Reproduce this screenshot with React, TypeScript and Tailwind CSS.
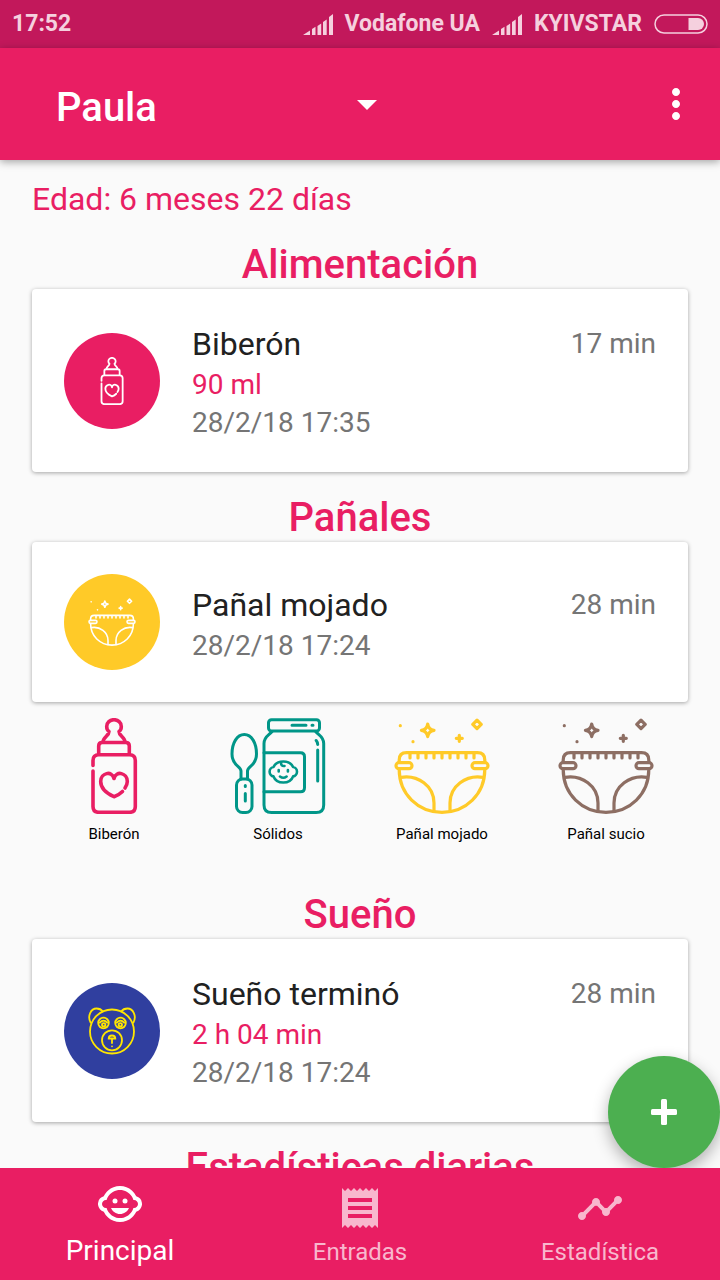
import React from 'react';
import { MdArrowDropDown, MdChildCare, MdMoreVert, MdReceipt, MdTimeline } from 'react-icons/md';

interface IconProps {
  className?: string;
}

interface Entry {
  title: string;
  detail?: string;
  date: string;
  ago: string;
  color: string;
  icon: React.ReactNode;
}

function BottleIcon({ className }: IconProps) {
  return (
    <svg viewBox="0 0 96 96" fill="none" stroke="currentColor" strokeWidth="3.600" strokeLinecap="round" strokeLinejoin="round" className={className}>
      {/* Nipple */}
      <path d="M37 24c0-5 6-6 6-10.500C41.500 12.500 40.700 10.500 40.700 8.500a7.300 6.800 0 0 1 14.600 0c0 2-.800 4-2.300 5C53 18 59 19 59 24" />
      {/* Collar */}
      <path d="M32.700 36V28q0-3.500 3.500-3.500h23.600q3.500 0 3.500 3.500v8" />
      {/* Body */}
      <path d="M27 47.500V42.500q0-5.800 5.800-5.800h30.700q5.800 0 5.800 5.800v46q0 5.800-5.800 5.800H32.800q-5.800 0-5.800-5.800V53" />
      <path d="M56.500 73.500Q53 77 48 78.700C42 76 34.700 71 34.700 63.500c0-8.500 11.300-11.500 13.300-3 2-8.500 13.300-5.500 13.300 3 0 3-1.300 5-2.300 6.500" />
    </svg>
  );
}

function JarIcon({ className }: IconProps) {
  return (
    <svg viewBox="0 0 96 96" fill="none" stroke="currentColor" strokeWidth="3" strokeLinecap="round" strokeLinejoin="round" className={className}>
      {/* Spoon */}
      <path d="M11 61v-8c0-5-9-5-9-17C2 25 7 16.500 14.300 16.500S26.500 25 26.500 36c0 12-9 12-9 17v8" />
      <rect x="6.500" y="61" width="15.500" height="33.500" rx="6" />
      <path d="M15.300 67.500v1M15.300 75.500v7.500" />
      {/* Lid */}
      <rect x="38.500" y="1.700" width="51" height="11.300" rx="3" />
      <path d="M62 7.300h14M82 7.300h1" />
      {/* Jar */}
      <path d="M42 13.500c-3 4-8 5-8 12v61.500q0 7.500 7.500 7.500h44.700q7.500 0 7.500-7.500V25.500c0-7-5-8-8-12" />
      <path d="M34 34.700h36.500q4 0 4 4v31q0 4-4 4H34" />
      <path d="M86.200 22.500q1.300 1.500 1.500 4M87.700 32v31" />
      {/* Baby face */}
      <path d="M43.500 49C45 45.500 49 43.500 53.300 43.500S61.600 45.500 63.100 49c2 .3 3.900 2.400 3.900 4.700s-1.900 4.400-3.900 4.700c-1.500 3.800-5.500 6.100-9.800 6.100s-8.300-2.300-9.800-6.100c-2-.3-3.900-2.400-3.900-4.700s1.900-4.400 3.900-4.700z" strokeWidth="2.600" />
      <path d="M51 44.500q0 4 3.500 3.500M48.700 52v1.500M57.900 52v1.500M50 58.500q3.300 2.500 6.600 0" strokeWidth="2.600" />
    </svg>
  );
}

function DiaperIcon({ className }: IconProps) {
  return (
    <svg viewBox="0 0 96 96" fill="none" stroke="currentColor" strokeWidth="3.200" strokeLinecap="round" strokeLinejoin="round" className={className}>
      {/* Sparkles */}
      <path d="M33.700 6q.8 5.500 6.300 6.300-5.500.8-6.300 6.300-.8-5.500-6.300-6.300 5.500-.8 6.300-6.300z" />
      <path d="M65.300 17.300v6M62.300 20.300h6" />
      <path d="M83 2.200l4.200 4.200-4.200 4.200-4.200-4.200z" />
      <path d="M6.300 7.700h.01M19 23.700h.01" />
      {/* Waist */}
      <path d="M5.200 44v-2q0-7.300 7.300-7.300h71q7.300 0 7.300 7.300v2" />
      <path d="M16 36v4M24 36v4M32 36v4M40 36v4M48 36v4M56 36v4M64 36v4M72 36v4M80 36v4" />
      <rect x="2" y="44.700" width="16" height="6" rx="3" />
      <rect x="78" y="44.700" width="16" height="6" rx="3" />
      {/* Legs */}
      <path d="M5.200 51.500C5.200 76 24 94.300 48 94.300S90.800 76 90.800 51.500" />
      <path d="M7 59.300C24 56.500 40 68 40 85v8M89 59.300C72 56.500 56 68 56 85v8" />
    </svg>
  );
}

function BearIcon({ className }: IconProps) {
  return (
    <svg viewBox="0 0 48 48" fill="none" stroke="currentColor" strokeWidth="1.800" strokeLinecap="round" className={className}>
      <circle cx="24" cy="24.500" r="22" />
      <path d="M2.600 15.500C-1 9 3 1.500 8.500 1.500c3 0 5 1.200 6.300 3M45.400 15.500C49 9 45 1.500 39.500 1.500c-3 0-5 1.200-6.300 3" />
      <circle cx="15.500" cy="16" r="5.300" />
      <circle cx="32.500" cy="16" r="5.300" />
      <path d="M11.800 15.700q3.700-4 7.400 0M28.800 15.700q3.700-4 7.400 0" />
      <circle cx="15.700" cy="17.800" r="1.700" />
      <circle cx="32.300" cy="17.800" r="1.700" />
      <circle cx="24" cy="33.300" r="10" />
      <path d="M20.700 31.500q0-3 3.300-3t3.300 3zM24 32v4M24 39.300h.01" />
    </svg>
  );
}

function SignalIcon() {
  return (
    <svg viewBox="0 0 30 21" fill="currentColor" className="w-[30px] h-[21px]">
      <path d="M0 21l7-4.500V21zM9 21v-6l3.500-2.200V21zM14.500 21v-9l3.700-2.500V21zM20 21V8l3.700-2.500V21zM26 21V3l4-3v21z" />
    </svg>
  );
}

function BatteryIcon() {
  return (
    <svg viewBox="0 0 54 20" className="w-[54px] h-5">
      <rect x="1" y="1" width="52" height="18" rx="9" fill="none" stroke="currentColor" strokeWidth="1.500" />
      <path d="M34.500 4H44a6 6 0 0 1 0 12H34.500z" fill="currentColor" />
    </svg>
  );
}

const feeding: Entry = {
  title: 'Biberón',
  detail: '90 ml',
  date: '28/2/18 17:35',
  ago: '17 min',
  color: 'bg-[#e91e63] text-white',
  icon: <BottleIcon className="size-12" />
};

const diaper: Entry = {
  title: 'Pañal mojado',
  date: '28/2/18 17:24',
  ago: '28 min',
  color: 'bg-[#ffca28] text-white',
  icon: <DiaperIcon className="size-12" />
};

const sleep: Entry = {
  title: 'Sueño terminó',
  detail: '2 h 04 min',
  date: '28/2/18 17:24',
  ago: '28 min',
  color: 'bg-[#303f9f] text-[#ffe600]',
  icon: <BearIcon className="size-12" />
};

const quickActions = [
  { label: 'Biberón', color: 'text-[#e91e63]', Icon: BottleIcon },
  { label: 'Sólidos', color: 'text-[#009688]', Icon: JarIcon },
  { label: 'Pañal mojado', color: 'text-[#ffca28]', Icon: DiaperIcon },
  { label: 'Pañal sucio', color: 'text-[#8d6e63]', Icon: DiaperIcon }
];

const tabs = [
  { label: 'Principal', Icon: MdChildCare, active: true },
  { label: 'Entradas', Icon: MdReceipt, active: false },
  { label: 'Estadística', Icon: MdTimeline, active: false }
];

function EntryCard({ entry }: { entry: Entry }) {
  return (
    <article className="flex items-center gap-8 min-h-40 px-8 py-[30px] rounded-sm bg-white shadow-[0_1px_4px_rgba(0,0,0,0.35)]">
      <div className={`flex items-center justify-center size-24 shrink-0 rounded-full ${entry.color}`}>
        {entry.icon}
      </div>
      <div className="flex-1 pt-[5px] text-[28px] leading-[38px] text-[#757575]">
        <div className="flex justify-between mb-[2px] leading-10">
          <h3 className="text-[32px] leading-10 text-[#212121]">{entry.title}</h3>
          <span>{entry.ago}</span>
        </div>
        {entry.detail && <p className="text-[#e91e63]">{entry.detail}</p>}
        <p>{entry.date}</p>
      </div>
    </article>
  );
}

function Section({ title, children }: { title: string; children?: React.ReactNode }) {
  return (
    <section>
      <h2 className="text-center text-[40px] leading-12 font-medium">{title}</h2>
      {children}
    </section>
  );
}

export default function App() {
  return (
    <div className="flex flex-col h-screen bg-[#fafafa] font-['Roboto',sans-serif] text-[#e91e63]">
      <div className="flex items-center justify-between h-12 shrink-0 px-3 bg-[#c2185b] text-[23px] leading-8 font-bold text-[#f5d0de]">
        <span>17:52</span>
        <div className="flex items-center gap-3">
          <SignalIcon />
          <span>Vodafone UA</span>
          <SignalIcon />
          <span>KYIVSTAR</span>
          <BatteryIcon />
        </div>
      </div>

      <header className="relative z-10 flex items-center justify-between h-28 shrink-0 pl-14 pr-5 bg-[#e91e63] text-white shadow-[0_2px_8px_rgba(0,0,0,0.35)]">
        <div className="relative flex items-center w-[52%]">
          <select aria-label="Bebé" className="w-full h-14 pt-[2px] appearance-none bg-transparent text-[40px] font-medium outline-none">
            <option>Paula</option>
          </select>
          <MdArrowDropDown className="absolute right-0 size-12 pointer-events-none" />
        </div>
        <button aria-label="Más opciones">
          <MdMoreVert className="size-12" />
        </button>
      </header>

      <div className="relative flex-1 min-h-0 overflow-hidden">
        <main className="flex flex-col gap-[22px] h-full overflow-hidden px-8 pt-[19px]">
          <p className="text-[32px] leading-10">Edad: 6 meses 22 días</p>

          <Section title="Alimentación">
            <EntryCard entry={feeding} />
          </Section>

          <Section title="Pañales">
            <EntryCard entry={diaper} />
            <div className="grid grid-cols-4 pt-4 pb-[23px]">
              {quickActions.map(({ label, color, Icon }) => (
                <button key={label} className="flex flex-col items-center gap-2">
                  <Icon className={`size-24 ${color}`} />
                  <span className="text-[15px] leading-6 text-black">{label}</span>
                </button>
              ))}
            </div>
          </Section>

          <Section title="Sueño">
            <EntryCard entry={sleep} />
          </Section>

          <Section title="Estadísticas diarias" />
        </main>

        <button
          aria-label="Añadir"
          className="absolute right-0 bottom-0 flex items-center justify-center size-28 rounded-full bg-[#4caf50] text-white shadow-[0_6px_16px_rgba(0,0,0,0.3)]"
        >
          <svg viewBox="0 0 26 26" fill="currentColor" className="size-[26px]">
            <rect x="10" y="0" width="6" height="26" rx="1.500" />
            <rect x="0" y="10" width="26" height="6" rx="1.500" />
          </svg>
        </button>
      </div>

      <nav className="grid grid-cols-3 h-28 shrink-0 bg-[#e91e63]">
        {tabs.map(({ label, Icon, active }) => (
          <a
            key={label}
            href="#"
            className={`flex flex-col items-center gap-1 ${
              active ? 'pt-3 text-[28px] leading-[38px] text-white' : 'pt-4 text-2xl text-[#f8b7cd]'
            }`}
          >
            <Icon className="size-12" />
            {label}
          </a>
        ))}
      </nav>
    </div>
  );
}
